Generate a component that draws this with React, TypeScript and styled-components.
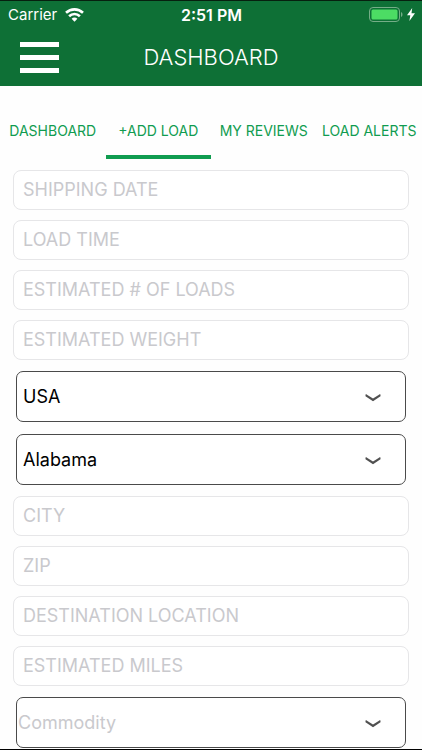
import React, { useState } from "react";
import styled, { createGlobalStyle } from "styled-components";

const GlobalStyle = createGlobalStyle`
  *, *::before, *::after { box-sizing: border-box; }
  body {
    margin: 0;
    background: #fff;
    font-family: Inter, "Liberation Sans", sans-serif;
  }
`;

const Screen = styled.div`
  display: flex;
  flex-direction: column;
  min-height: 100vh;
  border-top: 1px solid #06200f;
  border-bottom: 1px solid #000;
  background: #fefefe;
`;

const Header = styled.header`
  background: #0e7036;
  color: #fff;
`;

const StatusBar = styled.div`
  display: grid;
  grid-template-columns: 1fr auto 1fr;
  align-items: center;
  height: 27px;
  padding: 0 7px 0 8px;
`;

const Carrier = styled.div`
  display: flex;
  align-items: center;
  gap: 8px;
  font-size: 15px;
`;

const Clock = styled.time`
  font-size: 16px;
  font-weight: 600;
`;

const Power = styled.div`
  display: flex;
  align-items: center;
  justify-content: flex-end;
  gap: 4px;
`;

const TitleBar = styled.div`
  display: grid;
  grid-template-columns: 1fr auto 1fr;
  align-items: center;
  height: 58px;
  padding: 0 20px;
`;

const MenuButton = styled.button`
  display: flex;
  flex-direction: column;
  justify-self: start;
  gap: 8px;
  width: 39px;
  padding: 0;
  border: 0;
  background: none;
  cursor: pointer;
`;

const MenuLine = styled.span`
  height: 5px;
  background: #fff;
`;

const Title = styled.h1`
  margin: 0;
  font-size: 22px;
  font-weight: 300;
  line-height: 28px;
`;

const Tabs = styled.nav`
  display: grid;
  grid-template-columns: repeat(4, 1fr);
  height: 73px;
`;

const Tab = styled.a<{ $active: boolean }>`
  display: flex;
  align-items: center;
  justify-content: center;
  padding-top: 20px;
  border-bottom: 4px solid ${(p) => (p.$active ? "#109c50" : "transparent")};
  color: #109c50;
  font-size: 14px;
  line-height: 20px;
  text-decoration: none;
  white-space: nowrap;
`;

const Form = styled.form`
  display: flex;
  flex-direction: column;
  gap: 11px;
  padding: 11px 13px 0;
`;

const Group = styled.div<{ $gap: number; $inset?: boolean }>`
  display: flex;
  flex-direction: column;
  gap: ${(p) => p.$gap}px;
  padding: 0 ${(p) => (p.$inset ? 3 : 0)}px;
`;

const TextField = styled.input`
  width: 100%;
  height: 40px;
  padding: 0 9px 2px;
  border: 1px solid #e6e6e8;
  border-radius: 8px;
  background: #fff;
  color: #000;
  font-family: inherit;
  font-size: 18px;
  &::placeholder {
    color: #c9c9cd;
    opacity: 1;
  }
`;

const SelectBox = styled.div`
  position: relative;
`;

const Select = styled.select<{ $empty: boolean }>`
  display: block;
  width: 100%;
  height: 51px;
  padding: 0 44px 0 ${(p) => (p.$empty ? 1 : 6)}px;
  appearance: none;
  border: 1px solid #4a4a4a;
  border-radius: 7px;
  background: #fff;
  color: ${(p) => (p.$empty ? "#c9c9cd" : "#000")};
  font-family: inherit;
  font-size: 18px;
`;

const Chevron = styled.svg`
  position: absolute;
  top: 22px;
  right: 25px;
  pointer-events: none;
`;

const WifiIcon = () => (
  <svg width="19" height="14" viewBox="0 0 19 14" fill="none" stroke="#fff" strokeWidth="2.6" aria-hidden="true">
    <path d="M1 4.8C5.8.2 13.2.2 18 4.8" />
    <path d="M4.1 8.300c3.100-3 7.700-3 10.800 0" />
    <path d="M6.600 10.700c1.600-1.500 4.200-1.500 5.800 0L9.500 13.700Z" fill="#fff" stroke="none" />
  </svg>
);

const BatteryIcon = () => (
  <svg width="34" height="15" viewBox="0 0 34 15" aria-hidden="true">
    <rect x="0.5" y="0.5" width="30" height="14" rx="3.5" fill="none" stroke="#75ad87" />
    <rect x="2.5" y="2.5" width="26" height="10" rx="1.5" fill="#4cdc64" />
    <path d="M32 5c2 .7 2 4.300 0 5Z" fill="#75ad87" />
  </svg>
);

const BoltIcon = () => (
  <svg width="8" height="13" viewBox="0 0 8 13" aria-hidden="true">
    <path d="M5.200 0 0 7.200h3.300L2.400 13 8 5.300H4.500Z" fill="#fff" />
  </svg>
);

const tabs = ["DASHBOARD", "+ADD LOAD", "MY REVIEWS", "LOAD ALERTS"];

const TextFields = ({ names }: { names: string[] }) => (
  <Group $gap={10}>
    {names.map((name) => (
      <TextField key={name} type="text" aria-label={name} placeholder={name} />
    ))}
  </Group>
);

interface PickerProps {
  label: string;
  options: string[];
  initial?: string;
}

const Picker = ({ label, options, initial = "" }: PickerProps) => {
  const [value, setValue] = useState(initial);
  return (
    <SelectBox>
      <Select
        aria-label={label}
        value={value}
        $empty={value === ""}
        onChange={(e) => setValue(e.target.value)}
      >
        {initial === "" && <option value="">{label}</option>}
        {options.map((option) => (
          <option key={option}>{option}</option>
        ))}
      </Select>
      <Chevron width="16" height="9" viewBox="0 0 16 9" aria-hidden="true">
        <path d="M.5 1.500Q1.500 1 2.400 1.900L8 5.500l5.600-3.600q.9-.9 1.900-.4v1.700L8 8.300.5 3.200Z" fill="#505050" />
      </Chevron>
    </SelectBox>
  );
};

export default function App() {
  const [active, setActive] = useState("+ADD LOAD");
  return (
    <>
      <GlobalStyle />
      <Screen>
        <Header>
          <StatusBar>
            <Carrier>
              Carrier
              <WifiIcon />
            </Carrier>
            <Clock>2:51 PM</Clock>
            <Power>
              <BatteryIcon />
              <BoltIcon />
            </Power>
          </StatusBar>
          <TitleBar>
            <MenuButton type="button" aria-label="Menu">
              <MenuLine />
              <MenuLine />
              <MenuLine />
            </MenuButton>
            <Title>DASHBOARD</Title>
          </TitleBar>
        </Header>
        <Tabs>
          {tabs.map((tab) => (
            <Tab
              key={tab}
              href="#"
              $active={tab === active}
              aria-current={tab === active ? "page" : undefined}
              onClick={() => setActive(tab)}
            >
              {tab}
            </Tab>
          ))}
        </Tabs>
        <Form>
          <TextFields names={["SHIPPING DATE", "LOAD TIME", "ESTIMATED # OF LOADS", "ESTIMATED WEIGHT"]} />
          <Group $gap={12} $inset>
            <Picker label="Country" options={["USA"]} initial="USA" />
            <Picker label="State" options={["Alabama"]} initial="Alabama" />
          </Group>
          <TextFields names={["CITY", "ZIP", "DESTINATION LOCATION", "ESTIMATED MILES"]} />
          <Group $gap={12} $inset>
            <Picker label="Commodity" options={[]} />
          </Group>
        </Form>
      </Screen>
    </>
  );
}
